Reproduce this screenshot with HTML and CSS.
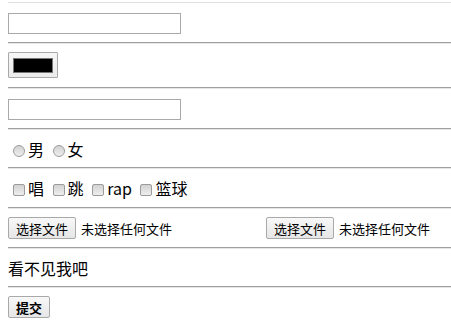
FILE: index.html
```html
<!DOCTYPE html>
<html>
    <head>
        <meta charset="utf-8">
        <title>表单</title>
        <link rel="stylesheet" href="styles.css">
    </head>
    <body>
        <div class="topline"></div>
        <form>
            <div class="row row-text">
                <input type="text" class="text-input">
            </div>
            <hr>
            <div class="row row-color">
                <input type="color" class="color-input" value="#000000">
            </div>
            <hr>
            <div class="row row-text">
                <input type="password" class="text-input">
            </div>
            <hr>
            <div class="row row-choice">
                <span><input type="radio" name="sex" class="radio">男 <input type="radio" name="sex" class="radio">女</span>
            </div>
            <hr>
            <div class="row row-check">
                <span><input type="checkbox" class="check">唱 <input type="checkbox" class="check">跳 <input type="checkbox" class="check">rap <input type="checkbox" class="check">篮球</span>
            </div>
            <hr>
            <div class="row row-file">
                <span class="file"><button type="button" class="btn">选择文件</button><span class="file-name">未选择任何文件</span></span>
                <span class="file"><button type="button" class="btn">选择文件</button><span class="file-name">未选择任何文件</span></span>
            </div>
            <hr>
            <div class="row row-note">看不见我吧</div>
            <hr>
            <div class="row row-submit">
                <button type="submit" class="btn btn-submit">提交</button>
            </div>
        </form>
    </body>
</html>
```

FILE: styles.css
```css
body{
    margin: 0 0 0 8px;
    font: 16px "Noto Sans CJK SC", "Liberation Sans", sans-serif;
    color: #000;
    background: #fff;
}

.topline{
    height: 1px;
    margin: 2px 0 0 -8px;
    background: #e0e0e0;
}

form{
    margin-top: 8px;
}

hr{
    height: 0;
    margin: 8px 0;
    border: 0;
    border-top: 1px solid #a0a0a0;
    border-bottom: 1px solid #e6e6e6;
}

.row{
    display: flex;
    align-items: center;
}

.row-text{
    height: 23px;
    align-items: flex-end;
}
.row-color{
    height: 27px;
    align-items: flex-start;
}
.row-choice{
    height: 21px;
}
.row-check{
    height: 22px;
}
.row-file{
    height: 22px;
    align-items: flex-start;
}
.row-note{
    height: 21px;
}

.text-input{
    box-sizing: border-box;
    width: 173px;
    height: 21px;
    margin: 0;
    padding: 1px 2px;
    border: 1px solid #a9a9a9;
    font-size: 13px;
}

.color-input{
    box-sizing: border-box;
    width: 50px;
    height: 26px;
    margin: 0;
    padding: 0;
    border: 1px solid #a9a9a9;
    border-radius: 1px;
    background: linear-gradient(#f6f6f6, #ebebeb);
}
.color-input::-webkit-color-swatch-wrapper{
    padding: 5px 4px 4px;
}
.color-input::-webkit-color-swatch{
    border: 1px solid #777;
    border-radius: 0;
}

.radio, .check{
    -webkit-appearance: none;
    appearance: none;
    box-sizing: border-box;
    width: 12px;
    height: 12px;
    margin: 0 3px 0 5px;
    vertical-align: -1px;
    border: 1px solid #9c9c9c;
    background: linear-gradient(#d2d2d2, #eeeeee);
}
.radio{
    border-radius: 50%;
}
.check{
    border-radius: 2px;
}

.file{
    display: inline-flex;
    flex-shrink: 0;
    align-items: center;
}
.file:first-child{
    width: 258px;
}
.file-name{
    margin-left: 5px;
    font-size: 13px;
}

.btn{
    box-sizing: border-box;
    height: 22px;
    margin: 0;
    padding: 0 7px;
    border: 1px solid #a9a9a9;
    border-radius: 2px;
    background: linear-gradient(#f8f8f8, #e6e6e6);
    font: 13px "Noto Sans CJK SC", "Liberation Sans", sans-serif;
    color: #000;
}
.btn-submit{
    font-weight: 700;
}
```
